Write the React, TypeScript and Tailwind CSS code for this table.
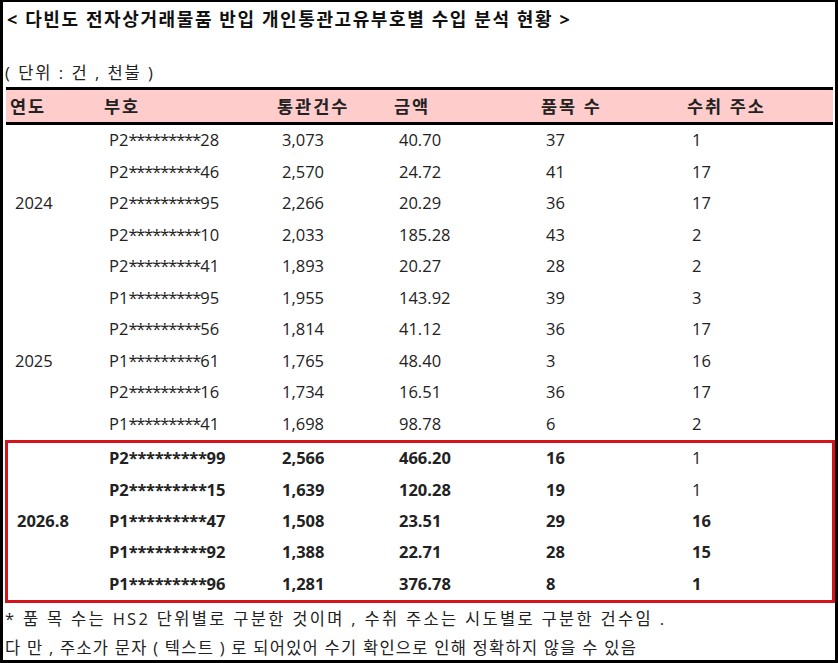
import React from "react";

type Row = { code: string; count: string; amount: string; items: string; addr: string; addrBold?: boolean };

const groups: { year: string; rows: Row[] }[] = [
  {
    year: "2024",
    rows: [
      { code: "P2*********28", count: "3,073", amount: "40.70", items: "37", addr: "1" },
      { code: "P2*********46", count: "2,570", amount: "24.72", items: "41", addr: "17" },
      { code: "P2*********95", count: "2,266", amount: "20.29", items: "36", addr: "17" },
      { code: "P2*********10", count: "2,033", amount: "185.28", items: "43", addr: "2" },
      { code: "P2*********41", count: "1,893", amount: "20.27", items: "28", addr: "2" },
    ],
  },
  {
    year: "2025",
    rows: [
      { code: "P1*********95", count: "1,955", amount: "143.92", items: "39", addr: "3" },
      { code: "P2*********56", count: "1,814", amount: "41.12", items: "36", addr: "17" },
      { code: "P1*********61", count: "1,765", amount: "48.40", items: "3", addr: "16" },
      { code: "P2*********16", count: "1,734", amount: "16.51", items: "36", addr: "17" },
      { code: "P1*********41", count: "1,698", amount: "98.78", items: "6", addr: "2" },
    ],
  },
];

const recent: Row[] = [
  { code: "P2*********99", count: "2,566", amount: "466.20", items: "16", addr: "1" },
  { code: "P2*********15", count: "1,639", amount: "120.28", items: "19", addr: "1" },
  { code: "P1*********47", count: "1,508", amount: "23.51", items: "29", addr: "16", addrBold: true },
  { code: "P1*********92", count: "1,388", amount: "22.71", items: "28", addr: "15", addrBold: true },
  { code: "P1*********96", count: "1,281", amount: "376.78", items: "8", addr: "1", addrBold: true },
];

const cols = "grid grid-cols-[94px_173px_117px_147px_146px_150px]";
const font = { fontFamily: '"Open Sans", "Noto Sans CJK KR", sans-serif' };

// masked code: tighten the asterisks so the run matches the reference width
function Code({ code, bold }: { code: string; bold?: boolean }) {
  const stars = code.slice(2, -2);
  return (
    <span>
      {code.slice(0, 2)}
      <span className={bold ? "tracking-[-0.35px]" : "tracking-[-1.1px]"}>{stars}</span>
      {code.slice(-2)}
    </span>
  );
}

function YearGroup({ year, rows }: { year: string; rows: Row[] }) {
  return (
    <div className={`${cols} grid-rows-[repeat(5,31.5px)]`}>
      <div className="row-span-5 flex items-center pl-[9px]">{year}</div>
      {rows.map((r) => (
        <React.Fragment key={r.code}>
          <div className="flex items-center pl-[9px]"><Code code={r.code} /></div>
          <div className="flex items-center pl-[9px]">{r.count}</div>
          <div className="flex items-center pl-[9px]">{r.amount}</div>
          <div className="flex items-center pl-[9px]">{r.items}</div>
          <div className="flex items-center pl-[9px]">{r.addr}</div>
        </React.Fragment>
      ))}
    </div>
  );
}

export default function App() {
  return (
    <div
      className="w-[838px] h-[663px] bg-white border-black border-t-2 border-l-[3px] border-r-[3px] border-b-[3px] text-[#222] text-[16.5px] overflow-hidden"
      style={font}
    >
      <div className="pl-[4px] pt-[5px] h-[56px] font-bold text-[18px] tracking-[1.6px] text-[#111] leading-[24px] whitespace-nowrap">
        &lt; 다빈도 전자상거래물품 반입 개인통관고유부호별 수입 분석 현황 &gt;
      </div>
      <div className="pl-[2px] h-[29px] leading-[30px] tracking-[2px]">( 단위 : 건 , 천불 )</div>
      <div className="ml-[3px] w-[827px]">
        <div className={`${cols} h-[38px] bg-[#ffcccc] border-y-[3px] border-black font-bold text-[17.5px] tracking-[2px] text-[#222]`}>
          <div className="flex items-center pl-[4px]">연도</div>
          <div className="flex items-center pl-[4px]">부호</div>
          <div className="flex items-center pl-[4px]">통관건수</div>
          <div className="flex items-center pl-[4px]">금액</div>
          <div className="flex items-center pl-[4px]">품목 수</div>
          <div className="flex items-center pl-[4px]">수취 주소</div>
        </div>
        {groups.map((g) => (
          <YearGroup key={g.year} year={g.year} rows={g.rows} />
        ))}
      </div>
      <div className="ml-[2px] w-[830px] h-[163px] border-[3px] border-[#d4141c] font-bold">
        <div className="grid grid-cols-[92px_173px_117px_147px_146px_149px] grid-rows-[repeat(5,31.4px)]">
          <div className="row-span-5 flex items-center pl-[9px]">2026.8</div>
          {recent.map((r) => (
            <React.Fragment key={r.code}>
              <div className="flex items-center pl-[9px]"><Code code={r.code} bold /></div>
              <div className="flex items-center pl-[9px]">{r.count}</div>
              <div className="flex items-center pl-[9px]">{r.amount}</div>
              <div className="flex items-center pl-[9px]">{r.items}</div>
              <div className={`flex items-center pl-[9px] ${r.addrBold ? "font-bold" : "font-normal"}`}>{r.addr}</div>
            </React.Fragment>
          ))}
        </div>
      </div>
      <div className="pl-[2px] pt-[1px] leading-[29px] text-[16.5px] whitespace-nowrap">
        <div className="tracking-[2.3px]">* 품 목 수는 HS2 단위별로 구분한 것이며 , 수취 주소는 시도별로 구분한 건수임 .</div>
        <div className="tracking-[1.25px]">다 만 , 주소가 문자 ( 텍스트 ) 로 되어있어 수기 확인으로 인해 정확하지 않을 수 있음</div>
      </div>
    </div>
  );
}
